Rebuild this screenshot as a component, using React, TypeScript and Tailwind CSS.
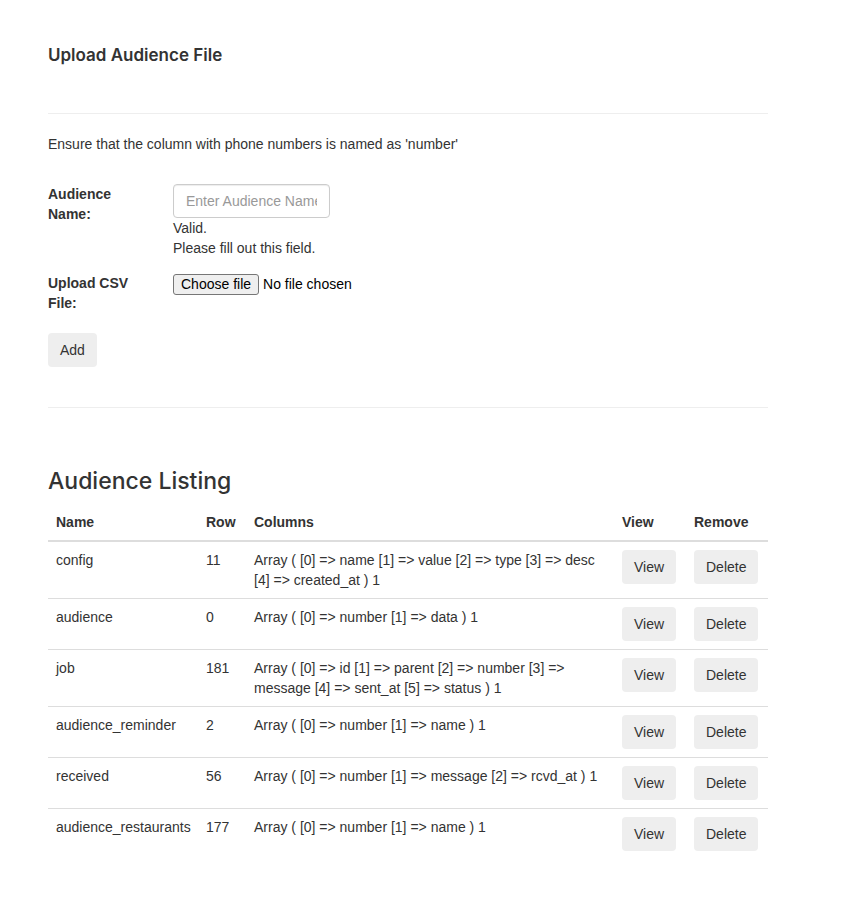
import React from 'react';

interface AudienceRow {
    name: string;
    rows: number;
    columns: string;
}

const audiences: AudienceRow[] = [
    { name: 'config', rows: 11, columns: 'Array ( [0] => name [1] => value [2] => type [3] => desc [4] => created_at ) 1' },
    { name: 'audience', rows: 0, columns: 'Array ( [0] => number [1] => data ) 1' },
    { name: 'job', rows: 181, columns: 'Array ( [0] => id [1] => parent [2] => number [3] => message [4] => sent_at [5] => status ) 1' },
    { name: 'audience_reminder', rows: 2, columns: 'Array ( [0] => number [1] => name ) 1' },
    { name: 'received', rows: 56, columns: 'Array ( [0] => number [1] => message [2] => rcvd_at ) 1' },
    { name: 'audience_restaurants', rows: 177, columns: 'Array ( [0] => number [1] => name ) 1' },
];

const GrayButton: React.FC<{ label: string }> = ({ label }) => (
    <button className="h-[34px] px-3 rounded-[4px] bg-[#eeeeee] text-[14px] leading-5 text-[#333] cursor-pointer hover:bg-[#e2e2e2]">
        {label}
    </button>
);

const App: React.FC = () => {
    return (
        <div className="min-h-[914px] bg-white font-['Liberation_Sans',Arial,sans-serif] text-[14px] leading-5 text-[#333]">
            <div className="w-[720px] ml-[48px] pt-[44px]">
                {/* upload form */}
                <h4 className="font-['Inter',sans-serif] text-[17px] leading-[22px] font-semibold">Upload Audience File</h4>
                <hr className="mt-[47px] border-0 border-t border-[#eeeeee]" />
                <p className="mt-[20px]">Ensure that the column with phone numbers is named as 'number'</p>

                <form className="mt-[30px]" onSubmit={(e) => e.preventDefault()}>
                    <div className="flex">
                        <label className="w-[95px] mr-[30px] font-bold">Audience Name:</label>
                        <div className="flex flex-col">
                            <input
                                type="text"
                                placeholder="Enter Audience Name"
                                className="w-[157px] h-[34px] px-3 rounded-[4px] border border-[#cccccc] shadow-[inset_0_1px_1px_rgba(0,0,0,0.075)] text-[14px] placeholder:text-[#999] outline-none"
                            />
                            <span>Valid.</span>
                            <span>Please fill out this field.</span>
                        </div>
                    </div>

                    <div className="flex mt-[15px]">
                        <label className="w-[95px] mr-[30px] font-bold">Upload CSV File:</label>
                        <div className="flex items-center h-[22px] text-[14px]">
                            <span className="h-[21px] px-[7px] flex items-center border border-[#767676] rounded-[3px] bg-[#efefef] text-black text-[14px]">Choose file</span>
                            <span className="ml-[4px] text-black">No file chosen</span>
                        </div>
                    </div>

                    <div className="mt-[20px]">
                        <GrayButton label="Add" />
                    </div>
                </form>

                <hr className="mt-[40px] border-0 border-t border-[#eeeeee]" />

                {/* listing */}
                <h3 className="mt-[60px] font-['Inter',sans-serif] text-[23px] leading-[27px] font-medium">Audience Listing</h3>

                <table className="mt-[9px] w-[720px] border-collapse table-fixed">
                    <colgroup>
                        <col className="w-[150px]" />
                        <col className="w-[48px]" />
                        <col className="w-[368px]" />
                        <col className="w-[72px]" />
                        <col className="w-[82px]" />
                    </colgroup>
                    <thead>
                        <tr className="border-b-2 border-[#dddddd] text-left">
                            <th className="p-2 font-bold">Name</th>
                            <th className="p-2 font-bold">Row</th>
                            <th className="p-2 font-bold">Columns</th>
                            <th className="p-2 font-bold">View</th>
                            <th className="p-2 font-bold">Remove</th>
                        </tr>
                    </thead>
                    <tbody>
                        {audiences.map((a, i) => (
                            <tr key={a.name} className={i > 0 ? 'border-t border-[#dddddd]' : ''}>
                                <td className="p-2 align-top">{a.name}</td>
                                <td className="p-2 align-top">{a.rows}</td>
                                <td className="p-2 align-top">{a.columns}</td>
                                <td className="p-2 align-top"><GrayButton label="View" /></td>
                                <td className="p-2 align-top"><GrayButton label="Delete" /></td>
                            </tr>
                        ))}
                    </tbody>
                </table>
            </div>
        </div>
    );
};

export default App;
